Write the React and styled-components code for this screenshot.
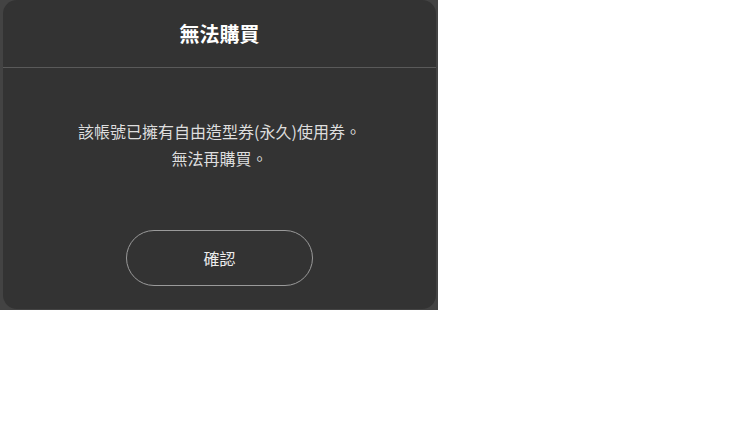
import React from "react";
import styled, { createGlobalStyle } from "styled-components";

const GlobalStyle = createGlobalStyle`
  html, body {
    margin: 0;
    padding: 0;
    background: #ffffff;
  }
  body {
    font-family: "Noto Sans CJK TC", "Noto Sans", sans-serif;
  }
`;

const Backdrop = styled.div`
  width: 438px;
  height: 310px;
  box-sizing: border-box;
  padding: 0 2px 1px 3px;
  background: #434343;
  display: flex;
`;

const Dialog = styled.div`
  flex: 1;
  display: flex;
  flex-direction: column;
  align-items: center;
  background: #333333;
  border-radius: 14px;
  color: #ffffff;
`;

const Header = styled.div`
  align-self: stretch;
  height: 67px;
  display: flex;
  align-items: center;
  justify-content: center;
  border-bottom: 1px solid #5a5a5a;
`;

const Title = styled.h2`
  margin: 0;
  font-size: 20px;
  font-weight: 700;
  letter-spacing: 0;
  color: #ffffff;
`;

const Message = styled.p`
  margin: 50px 0 0;
  font-size: 16px;
  line-height: 27px;
  text-align: center;
  color: #dedede;
`;

const ConfirmButton = styled.button`
  margin-top: 58px;
  width: 187px;
  height: 56px;
  border: 1px solid #9a9a9a;
  border-radius: 28px;
  background: transparent;
  color: #ececec;
  font-family: inherit;
  font-size: 16px;
  cursor: pointer;
`;

const App = () => {
  return (
    <>
      <GlobalStyle />
      <Backdrop>
        <Dialog>
          <Header>
            <Title>無法購買</Title>
          </Header>
          <Message>
            該帳號已擁有自由造型券(永久)使用券。
            <br />
            無法再購買。
          </Message>
          <ConfirmButton type="button">確認</ConfirmButton>
        </Dialog>
      </Backdrop>
    </>
  );
};

export default App;
